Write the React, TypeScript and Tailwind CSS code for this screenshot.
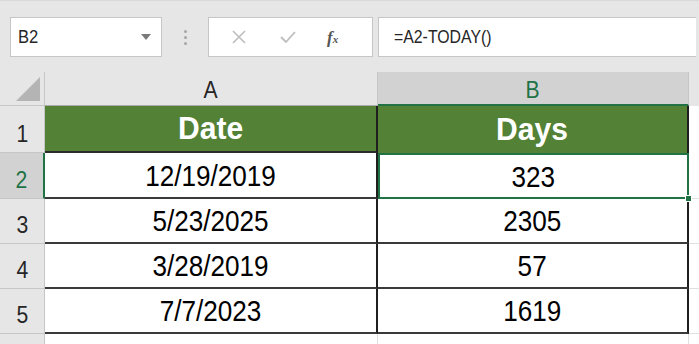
import React from 'react'

const rows = [
  { n: 2, date: '12/19/2019', days: '323' },
  { n: 3, date: '5/23/2025', days: '2305' },
  { n: 4, date: '3/28/2019', days: '57' },
  { n: 5, date: '7/7/2023', days: '1619' },
]

const rowHeights: Record<number, string> = {
  2: 'h-[46px]',
  3: 'h-[45px]',
  4: 'h-[45px]',
  5: 'h-[45px]',
}

function FormulaBar() {
  return (
    <div className="h-[72px] bg-[#e6e6e6] flex items-start pt-[16px] border-t border-[#d9d9d9]">
      {/* name box */}
      <div className="ml-[10px] w-[152px] h-[40px] bg-white border border-[#c6c6c6] flex items-center justify-between pl-[7px] pr-[10px]">
        <span className="text-[18px] text-[#262626] leading-none inline-block scale-x-[0.92] origin-left">B2</span>
        <svg width="10" height="6" viewBox="0 0 10 6">
          <path d="M0 0 L10 0 L5 6 Z" fill="#7a7a7a" />
        </svg>
      </div>
      {/* dots */}
      <div className="w-[46px] h-[40px] flex flex-col items-center justify-center gap-[3px]">
        <span className="w-[3px] h-[3px] bg-[#a6a6a6] rounded-full" />
        <span className="w-[3px] h-[3px] bg-[#a6a6a6] rounded-full" />
        <span className="w-[3px] h-[3px] bg-[#a6a6a6] rounded-full" />
      </div>
      {/* icon box */}
      <div className="w-[165px] h-[40px] bg-white border border-[#c6c6c6] flex items-center">
        <svg className="ml-[22px]" width="16" height="16" viewBox="0 0 16 16">
          <path d="M2 2 L14 14 M14 2 L2 14" stroke="#bdbdbd" strokeWidth="1.6" fill="none" />
        </svg>
        <svg className="ml-[32px]" width="18" height="16" viewBox="0 0 18 16">
          <path d="M2 8 L7 13 L16 3" stroke="#bdbdbd" strokeWidth="1.8" fill="none" />
        </svg>
        <span className="ml-[30px] text-[17px] italic font-bold text-[#555] leading-none font-['Liberation_Serif',serif]">
          f<span className="text-[11px]">x</span>
        </span>
      </div>
      {/* formula input */}
      <div className="ml-[5px] w-[318px] h-[40px] bg-white border border-[#c6c6c6] border-r-0 flex items-center pl-[15px]">
        <span className="text-[18px] text-[#262626] leading-none inline-block scale-x-[0.88] origin-left">=A2-TODAY()</span>
      </div>
    </div>
  )
}

function HeaderRow() {
  return (
    <div className="flex h-[34px] bg-[#e6e6e6]">
      <div className="w-[45px] shrink-0 border-r border-[#c6c6c6] border-b border-b-[#c6c6c6] flex items-end justify-end pr-[4px] pb-[4px]">
        <svg width="24" height="24" viewBox="0 0 24 24">
          <path d="M24 0 L24 24 L0 24 Z" fill="#b4b4b4" />
        </svg>
      </div>
      <div className="w-[333px] shrink-0 border-r border-[#c6c6c6] border-b border-b-[#ababab] flex items-end justify-center pb-[1px]">
        <span className="text-[23px] leading-none text-[#262626] pb-[2px] inline-block scale-x-[0.92]">A</span>
      </div>
      <div className="w-[311px] shrink-0 bg-[#d2d2d2] border-r border-[#c6c6c6] border-b-2 border-b-[#217346] flex items-end justify-center">
        <span className="text-[23px] leading-none text-[#217346] pb-[2px] inline-block scale-x-[0.92]">B</span>
      </div>
      <div className="flex-1" />
    </div>
  )
}

export default function App() {
  return (
    <div className="w-[699px] h-[344px] overflow-hidden bg-white font-['Liberation_Sans',Arial,sans-serif]">
      <FormulaBar />
      <HeaderRow />

      {/* row 1 */}
      <div className="flex h-[47px]">
        <div className="w-[45px] shrink-0 bg-[#e6e6e6] border-r border-[#c6c6c6] border-b border-b-[#c6c6c6] flex items-end justify-center pb-[6px]">
          <span className="text-[23px] leading-none text-[#262626] inline-block scale-x-[0.92]">1</span>
        </div>
        <div className="w-[333px] shrink-0 bg-[#538135] border-r-2 border-[#1f1f1f] border-b-2 border-b-[#2b2b2b] flex items-center justify-center">
          <span className="text-[31px] font-bold text-white leading-none inline-block scale-x-[0.97]">Date</span>
        </div>
        <div className="w-[311px] shrink-0 bg-[#538135] border-r-2 border-[#1f1f1f] flex items-center justify-center">
          <span className="text-[31px] font-bold text-white leading-none inline-block scale-x-[0.97]">Days</span>
        </div>
        <div className="flex-1" />
      </div>

      {rows.map((r) => {
        const sel = r.n === 2
        return (
          <div key={r.n} className={`flex ${rowHeights[r.n]}`}>
            <div
              className={
                sel
                  ? 'w-[45px] shrink-0 bg-[#d2d2d2] border-r-2 border-[#217346] border-b border-b-[#c6c6c6] flex items-end justify-center pb-[6px]'
                  : 'w-[45px] shrink-0 bg-[#e6e6e6] border-r border-[#c6c6c6] border-b border-b-[#c6c6c6] flex items-end justify-center pb-[6px]'
              }
            >
              <span className={`text-[23px] leading-none inline-block scale-x-[0.92] ${sel ? 'text-[#217346]' : 'text-[#262626]'}`}>{r.n}</span>
            </div>
            <div className="w-[333px] shrink-0 border-r-2 border-[#1f1f1f] border-b-2 border-b-[#3a3a3a] flex items-center justify-center">
              <span className="text-[29px] text-black leading-none pt-[2px] inline-block scale-x-[0.9]">{r.date}</span>
            </div>
            {sel ? (
              <div className="relative w-[311px] shrink-0 border-2 border-[#217346] flex items-center justify-center">
                <span className="text-[29px] text-black leading-none pt-[2px] inline-block scale-x-[0.9]">{r.days}</span>
                <span className="absolute right-[-5px] bottom-[-5px] w-[7px] h-[7px] bg-[#217346] border border-white" />
              </div>
            ) : (
              <div className="w-[311px] shrink-0 border-r-2 border-[#1f1f1f] border-b-2 border-b-[#3a3a3a] flex items-center justify-center">
                <span className="text-[29px] text-black leading-none pt-[2px] inline-block scale-x-[0.9]">{r.days}</span>
              </div>
            )}
            <div className="flex-1 border-b border-[#e0e0e0]" />
          </div>
        )
      })}

      {/* partial row 6 */}
      <div className="flex h-[12px]">
        <div className="w-[45px] shrink-0 bg-[#e6e6e6] border-r border-[#c6c6c6]" />
        <div className="w-[333px] shrink-0 border-r border-[#e0e0e0]" />
        <div className="w-[311px] shrink-0 border-r border-[#e0e0e0]" />
      </div>
    </div>
  )
}
